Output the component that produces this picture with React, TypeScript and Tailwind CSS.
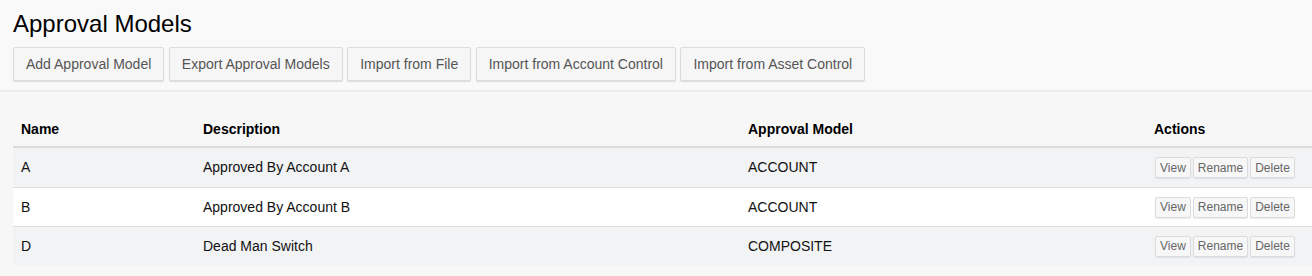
const buttons = [
  'Add Approval Model',
  'Export Approval Models',
  'Import from File',
  'Import from Account Control',
  'Import from Asset Control',
]

const rows = [
  { name: 'A', description: 'Approved By Account A', model: 'ACCOUNT' },
  { name: 'B', description: 'Approved By Account B', model: 'ACCOUNT' },
  { name: 'D', description: 'Dead Man Switch', model: 'COMPOSITE' },
]

export default function App() {
  return (
    <div className="h-[276px] w-[1312px] overflow-hidden bg-[#f7f7f8] font-['Liberation_Sans',Arial,sans-serif] text-[#111]">
      {/* Page header */}
      <div className="h-[92px] border-b-2 border-[#ececec] bg-[#f9f9f9] pl-[13px] pt-[10px]">
        <h1 className="text-[24px] leading-[28px] text-black">Approval Models</h1>
        <div className="mt-[9px] flex gap-[4.5px]">
          {buttons.map(b => (
            <button
              key={b}
              className="h-[34px] rounded-[2px] border border-[#dcdcdc] bg-[#f6f6f6] px-[12px] text-[14px] text-[#555] shadow-[0_1px_1px_rgba(0,0,0,0.12)]"
            >
              {b}
            </button>
          ))}
        </div>
      </div>

      {/* Table */}
      <div className="ml-[13px] mt-[18px] text-[14px]">
        <div className="grid h-[38px] grid-cols-[182px_545px_406px_1fr] items-center border-b-2 border-[#dcdcdc] pt-[3px] font-bold text-black">
          <div className="pl-[8px]">Name</div>
          <div className="pl-[8px]">Description</div>
          <div className="pl-[8px]">Approval Model</div>
          <div className="pl-[8px]">Actions</div>
        </div>
        {rows.map((r, i) => (
          <div
            key={r.name}
            className={
              'grid h-[39px] grid-cols-[182px_545px_406px_1fr] items-center ' +
              (i > 0 ? 'border-t border-[#dcdcdc] ' : '') +
              (i % 2 === 0 ? 'bg-[#f2f3f5]' : 'bg-white')
            }
          >
            <div className="pl-[8px]">{r.name}</div>
            <div className="pl-[8px]">{r.description}</div>
            <div className="pl-[8px]">{r.model}</div>
            <div className="flex gap-[2px] pl-[9px]">
              {['View', 'Rename', 'Delete'].map(a => (
                <button
                  key={a}
                  className="h-[21px] rounded-[2px] border border-[#dcdcdc] bg-[#f7f7f7] px-[4px] text-[12px] leading-none text-[#666] shadow-[0_1px_1px_rgba(0,0,0,0.08)]"
                >
                  {a}
                </button>
              ))}
            </div>
          </div>
        ))}
      </div>
    </div>
  )
}
